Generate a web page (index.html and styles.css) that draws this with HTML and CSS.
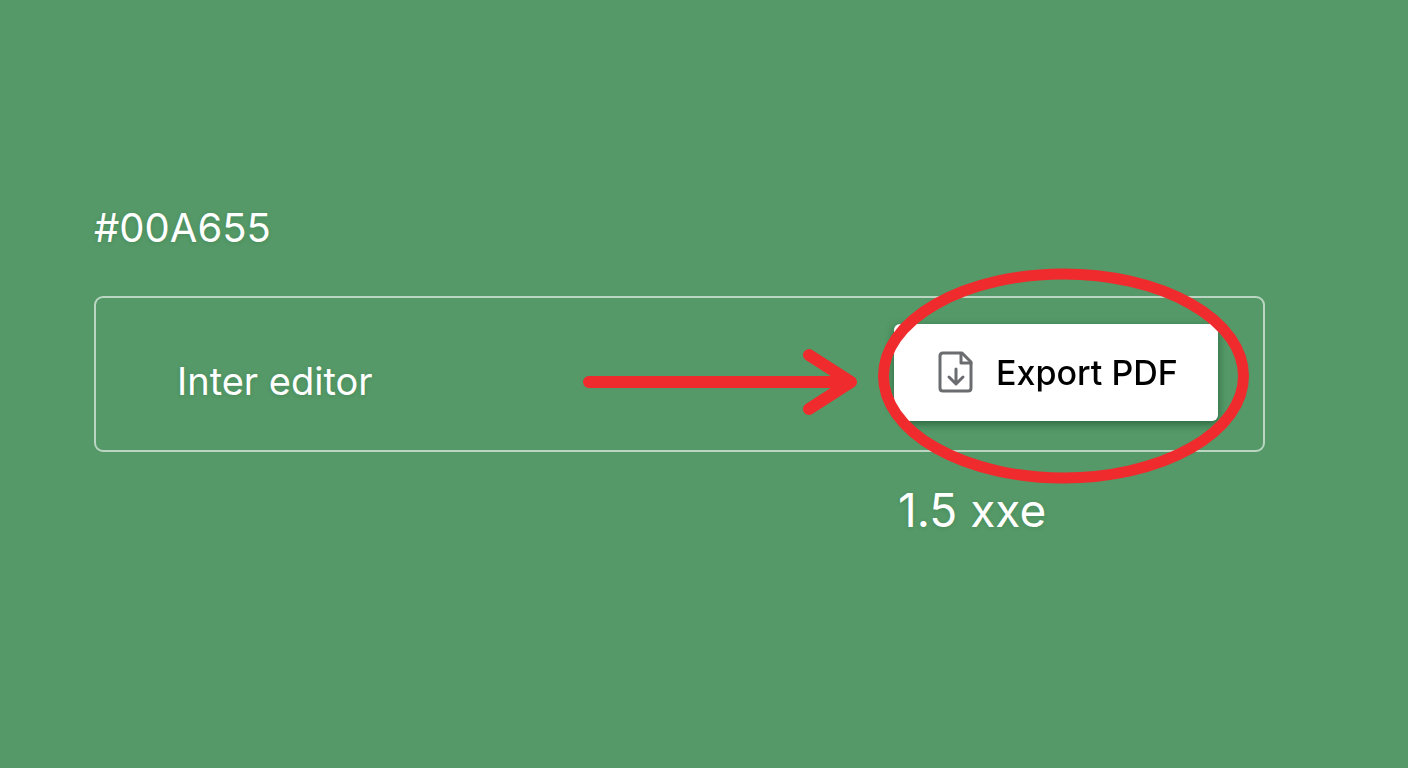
FILE: index.html
```html
<!DOCTYPE html>
<html lang="en">
<head>
  <meta charset="UTF-8">
  <meta name="viewport" content="width=device-width, initial-scale=1.0">
  <title>Export PDF</title>
  <link rel="stylesheet" href="styles.css">
</head>
<body>
  <main class="container">
    <h1>#00A655</h1>
    <section class="editor">
      <h2>Inter editor</h2>
      <svg class="arrow" viewBox="0 0 276 70" width="276" height="70" aria-hidden="true">
        <path d="M7 36H266M227 9L269 36L227 63" />
      </svg>
      <div class="export">
        <div class="shadow">
          <button class="export-btn" type="button">
            <svg class="file-icon" viewBox="0 0 35 42" width="35" height="42" aria-hidden="true">
              <path d="M5 1H24L33 10V36Q33 39 30 39H5Q2 39 2 36V4Q2 1 5 1Z" />
              <path d="M23 2V11H33" />
              <path d="M18 17V32M11 25L18 32L25 25" />
            </svg>
            Export PDF
          </button>
        </div>
        <svg class="circle" viewBox="0 0 371 216" width="371" height="216" aria-hidden="true">
          <ellipse cx="185.5" cy="108" rx="180" ry="102" />
        </svg>
      </div>
    </section>
    <p class="caption">1.5 xxe</p>
  </main>
</body>
</html>
```

FILE: styles.css
```css
* {
  margin: 0;
  padding: 0;
  box-sizing: border-box;
}
body {
  min-height: 100vh;
  background-color: #549967;
  color: white;
  font-family: Inter, "Liberation Sans", sans-serif;
}
.container {
  padding: 200px 143px 0 94px;
}
h1,
h2,
.caption {
  font-weight: 400;
  text-shadow: 0 1px 4px rgba(0, 60, 20, 0.15);
}
h1 {
  font-size: 40px;
  line-height: 56px;
}
h2 {
  font-size: 38px;
  line-height: 48px;
}
.editor {
  display: flex;
  align-items: center;
  margin-top: 40px;
  padding: 14px 45px 0 81px;
  min-height: 156px;
  border: 2px solid rgba(255, 255, 255, 0.6);
  border-radius: 9px;
}
.arrow {
  margin: 0 36px 0 auto;
}
.arrow path {
  fill: none;
  stroke: #f02b2d;
  stroke-width: 12px;
  stroke-linecap: round;
  stroke-linejoin: round;
}
.export {
  position: relative;
  margin-bottom: 17px;
}
.shadow {
  filter: drop-shadow(0 3px 4px rgba(0, 50, 20, 0.5));
}
.export-btn {
  display: flex;
  align-items: center;
  justify-content: center;
  gap: 23px;
  width: 324px;
  height: 97px;
  padding-left: 4px;
  border: none;
  border-radius: 6px;
  background-color: white;
  color: black;
  font-family: inherit;
  font-size: 34px;
  font-weight: 500;
  cursor: pointer;
  /* bottom left corner is cut where the circle crosses it */
  clip-path: polygon(0 0, 100% 0, 100% 100%, 14px 100%, 0 80px);
}
.file-icon {
  overflow: visible;
}
.file-icon path {
  fill: none;
  stroke: #6b6c6f;
  stroke-width: 3px;
  stroke-linecap: round;
  stroke-linejoin: round;
}
.circle {
  position: absolute;
  top: -56px;
  left: -16px;
  pointer-events: none;
}
.circle ellipse {
  fill: none;
  stroke: #f02b2d;
  stroke-width: 11px;
}
.caption {
  width: 320px;
  margin: 30px 47px 0 auto;
  font-size: 46px;
  line-height: 56px;
}
```
